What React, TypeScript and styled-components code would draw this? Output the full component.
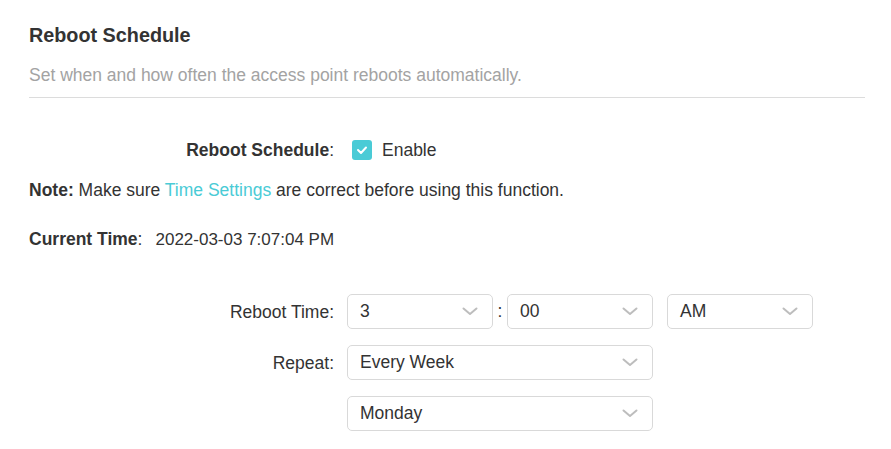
import React from "react";
import styled, { createGlobalStyle } from "styled-components";

const GlobalStyle = createGlobalStyle`
  body {
    margin: 0;
    background: #fff;
    font-family: "Liberation Sans", Arial, sans-serif;
    color: #333;
  }
`;

const TEAL = "#4acbd6";
const TEXT = "17.5px";

type SelectProps = {
  value: string;
  width: number;
};

const Select: React.FC<SelectProps> = ({ value, width }) => (
  <SelectBox $width={width}>
    <SelectValue>{value}</SelectValue>
    <Chevron width="16" height="9" viewBox="0 0 16 9">
      <polyline points="1.5,1.5 8,7 14.5,1.5" />
    </Chevron>
  </SelectBox>
);

const App: React.FC = () => {
  return (
    <>
      <GlobalStyle />
      <Page>
        <Header>
          <Title>Reboot Schedule</Title>
          <Description>
            Set when and how often the access point reboots automatically.
          </Description>
        </Header>

        <FormRow $top={40}>
          <Label $bold>
            Reboot Schedule<Colon>:</Colon>
          </Label>
          <CheckboxWrap>
            <Checkbox>
              <svg width="12" height="10" viewBox="0 0 12 10">
                <polyline
                  points="2,5 5,8 10,2.5"
                  fill="none"
                  stroke="#fff"
                  strokeWidth="2"
                  strokeLinecap="round"
                  strokeLinejoin="round"
                />
              </svg>
            </Checkbox>
            <span>Enable</span>
          </CheckboxWrap>
        </FormRow>

        <Note>
          <strong>Note:</strong> Make sure <Link>Time Settings</Link> are
          correct before using this function.
        </Note>

        <CurrentTime>
          <strong>Current Time</strong>:<TimeValue>2022-03-03 7:07:04 PM</TimeValue>
        </CurrentTime>

        <FormRow $top={42}>
          <Label>Reboot Time:</Label>
          <Controls>
            <Select value="3" width={146} />
            <TimeColon>:</TimeColon>
            <Select value="00" width={146} />
            <Spacer />
            <Select value="AM" width={146} />
          </Controls>
        </FormRow>

        <FormRow $top={16}>
          <Label>Repeat:</Label>
          <Controls>
            <Select value="Every Week" width={306} />
          </Controls>
        </FormRow>

        <FormRow $top={16}>
          <Label />
          <Controls>
            <Select value="Monday" width={306} />
          </Controls>
        </FormRow>
      </Page>
    </>
  );
};

export default App;

const Page = styled.div`
  width: 836px;
  padding: 23px 0 0 29px;
`;

const Header = styled.div`
  border-bottom: 1px solid #dcdcdc;
  padding-bottom: 10px;
`;

const Title = styled.h2`
  margin: 0;
  font-size: 19.8px;
  line-height: 24px;
  font-weight: bold;
  color: #333;
`;

const Description = styled.p`
  margin: 16px 0 0;
  font-size: ${TEXT};
  line-height: 24px;
  color: #a3a3a3;
`;

const FormRow = styled.div<{ $top: number }>`
  display: flex;
  align-items: center;
  margin-top: ${({ $top }) => $top}px;
  min-height: 24px;
`;

const Label = styled.div<{ $bold?: boolean }>`
  width: 305px;
  flex-shrink: 0;
  text-align: right;
  font-size: ${TEXT};
  line-height: 24px;
  font-weight: ${({ $bold }) => ($bold ? "bold" : "normal")};
  color: #333;
`;

const Colon = styled.span`
  font-weight: normal;
`;

const CheckboxWrap = styled.label`
  display: flex;
  align-items: center;
  gap: 10px;
  margin-left: 18px;
  font-size: ${TEXT};
  line-height: 24px;
  color: #333;
`;

const Checkbox = styled.span`
  width: 20px;
  height: 20px;
  border-radius: 3px;
  background: ${TEAL};
  display: flex;
  align-items: center;
  justify-content: center;
`;

const Note = styled.p`
  margin: 16px 0 0;
  font-size: ${TEXT};
  line-height: 24px;
  color: #333;
`;

const Link = styled.span`
  color: ${TEAL};
`;

const CurrentTime = styled.div`
  margin-top: 25px;
  font-size: ${TEXT};
  line-height: 24px;
  color: #333;
`;

const TimeValue = styled.span`
  margin-left: 13px;
  font-size: 17px;
`;

const Controls = styled.div`
  display: flex;
  align-items: center;
  margin-left: 13px;
`;

const SelectBox = styled.div<{ $width: number }>`
  box-sizing: border-box;
  width: ${({ $width }) => $width}px;
  height: 35px;
  border: 1px solid #d9d9d9;
  border-radius: 5px;
  display: flex;
  align-items: center;
  justify-content: space-between;
  padding: 0 14px 0 12px;
  background: #fff;
`;

const SelectValue = styled.span`
  font-size: ${TEXT};
  color: #333;
`;

const Chevron = styled.svg`
  fill: none;
  stroke: #bdbdbd;
  stroke-width: 2;
  stroke-linecap: round;
  stroke-linejoin: round;
`;

const TimeColon = styled.span`
  width: 14px;
  text-align: center;
  font-size: ${TEXT};
  color: #333;
`;

const Spacer = styled.div`
  width: 14px;
`;
